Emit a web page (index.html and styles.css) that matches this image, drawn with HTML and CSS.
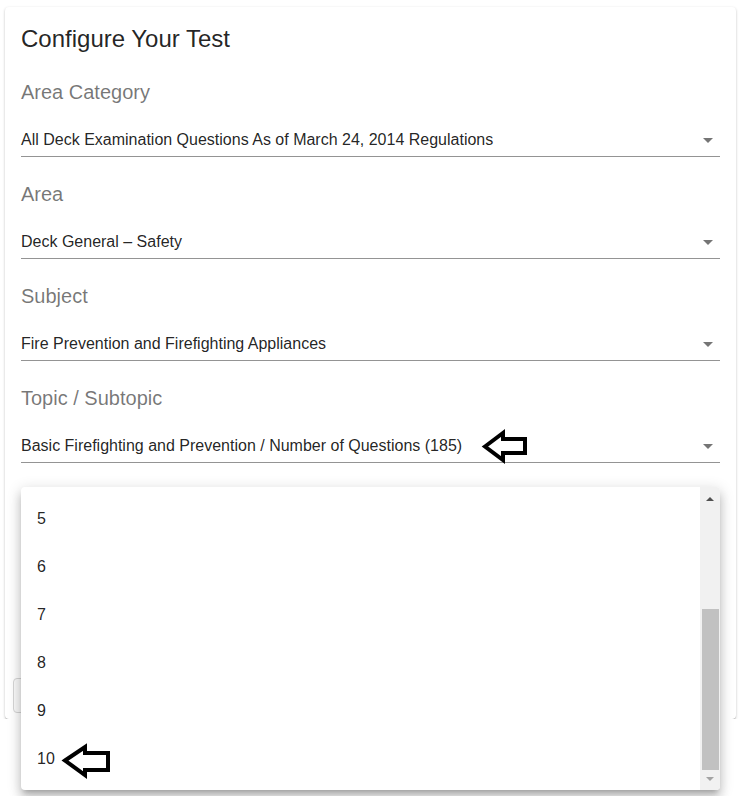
FILE: index.html
```html
<!DOCTYPE html>
<html>
<head>
<meta charset="utf-8">
<link rel="stylesheet" href="styles.css">
</head>
<body>
<div class="card">
  <h1 class="title">Configure Your Test</h1>

  <div class="field">
    <div class="label">Area Category</div>
    <div class="select">
      <span class="value">All Deck Examination Questions As of March 24, 2014 Regulations</span>
      <svg class="caret" viewBox="0 0 24 24" width="24" height="24"><path d="M7 10l5 5 5-5z"/></svg>
    </div>
  </div>

  <div class="field">
    <div class="label">Area</div>
    <div class="select">
      <span class="value">Deck General – Safety</span>
      <svg class="caret" viewBox="0 0 24 24" width="24" height="24"><path d="M7 10l5 5 5-5z"/></svg>
    </div>
  </div>

  <div class="field">
    <div class="label">Subject</div>
    <div class="select">
      <span class="value">Fire Prevention and Firefighting Appliances</span>
      <svg class="caret" viewBox="0 0 24 24" width="24" height="24"><path d="M7 10l5 5 5-5z"/></svg>
    </div>
  </div>

  <div class="field">
    <div class="label">Topic / Subtopic</div>
    <div class="select">
      <span class="value">Basic Firefighting and Prevention / Number of Questions (185)</span>
      <svg class="caret" viewBox="0 0 24 24" width="24" height="24"><path d="M7 10l5 5 5-5z"/></svg>
    </div>
  </div>

  <div class="actions">
    <div class="btn"></div>
  </div>
</div>

<div class="menu">
  <ul class="options">
    <li>5</li>
    <li>6</li>
    <li>7</li>
    <li>8</li>
    <li>9</li>
    <li>10</li>
  </ul>
  <div class="scrollbar">
    <div class="sb-btn sb-up"><span class="tri-up"></span></div>
    <div class="sb-space"></div>
    <div class="sb-thumb"></div>
    <div class="sb-btn sb-down"><span class="tri-down"></span></div>
  </div>
</div>

<svg class="annot annot-1" width="50" height="36" viewBox="0 0 50 36">
  <polygon points="4,17.5 22,4 22,10 44,10 44,24 22,24 22,31" />
</svg>
<svg class="annot annot-2" width="52" height="38" viewBox="0 0 52 38">
  <polygon points="4,17.5 24,4 24,10 47,10 47,27 24,27 24,32" />
</svg>
</body>
</html>
```

FILE: styles.css
```css
html, body {
  margin: 0;
  padding: 0;
  background: #ffffff;
  font-family: "Liberation Sans", Arial, sans-serif;
}

.card {
  margin: 7px 3px 0 5px;
  width: 699px;
  height: 696px;
  padding: 16px 16px 0 16px;
  background: #fff;
  border-radius: 4px;
  box-shadow: 0 1px 3px rgba(0,0,0,0.2), 0 1px 1px rgba(0,0,0,0.14), 0 2px 1px -1px rgba(0,0,0,0.12);
  display: flex;
  flex-direction: column;
}

.title {
  margin: 0;
  font-size: 24px;
  line-height: 32px;
  font-weight: 400;
  color: rgba(0,0,0,0.87);
}

.field {
  margin-top: 25px;
}

.label {
  font-size: 20px;
  line-height: 24px;
  color: rgba(0,0,0,0.54);
  margin-bottom: 26px;
}

.select {
  display: flex;
  align-items: flex-start;
  padding-bottom: 7px;
  border-bottom: 1px solid rgba(0,0,0,0.42);
}

.value {
  flex: 1;
  font-size: 16px;
  line-height: 19px;
  color: rgba(0,0,0,0.87);
}

.caret {
  margin: -2px 0 -3px 0;
  fill: rgba(0,0,0,0.54);
  flex: none;
}

.actions {
  margin-top: auto;
  margin-bottom: 6px;
  margin-left: -8px;
}

.btn {
  width: 110px;
  height: 35px;
  border: 1px solid #d6d6d6;
  border-radius: 4px;
  background: #fafafa;
  box-sizing: border-box;
}

.menu {
  position: absolute;
  top: 487px;
  left: 21px;
  width: 699px;
  height: 303px;
  background: #fff;
  border-radius: 4px;
  box-shadow: 0 5px 5px -3px rgba(0,0,0,0.2), 0 8px 10px 1px rgba(0,0,0,0.14), 0 3px 14px 2px rgba(0,0,0,0.12);
  display: flex;
  overflow: hidden;
}

.options {
  list-style: none;
  margin: 0;
  padding: 8px 0 0 0;
  flex: 1;
}

.options li {
  height: 48px;
  line-height: 48px;
  padding-left: 16px;
  font-size: 16px;
  color: rgba(0,0,0,0.87);
}

.scrollbar {
  width: 20px;
  background: #f1f1f1;
  display: flex;
  flex-direction: column;
}

.sb-btn {
  height: 17px;
  display: flex;
  justify-content: center;
  flex: none;
}

.sb-up {
  align-items: flex-end;
  padding-bottom: 3px;
  box-sizing: border-box;
  height: 17px;
}

.sb-down {
  align-items: flex-start;
  padding-top: 4px;
  box-sizing: border-box;
}

.sb-space {
  flex: 1;
}

.sb-thumb {
  height: 161px;
  margin: 0 1px 3px 2px;
  background: #c1c1c1;
  flex: none;
}

.tri-up {
  width: 0;
  height: 0;
  border-left: 4px solid transparent;
  border-right: 4px solid transparent;
  border-bottom: 4px solid #505050;
}

.tri-down {
  width: 0;
  height: 0;
  border-left: 4px solid transparent;
  border-right: 4px solid transparent;
  border-top: 4px solid #a3a3a3;
}

.annot {
  position: absolute;
}
.annot polygon {
  fill: none;
  stroke: #000;
  stroke-width: 4;
  stroke-linejoin: miter;
}
.annot-1 {
  left: 481px;
  top: 429px;
}
.annot-2 {
  left: 61px;
  top: 743px;
}
```
